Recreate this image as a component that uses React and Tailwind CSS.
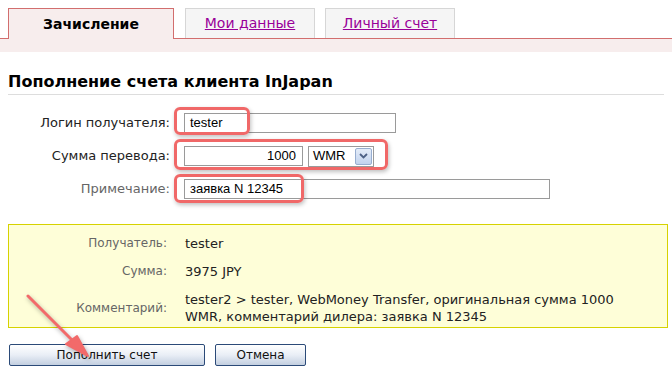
import React from 'react';

const Highlight = ({ className }) => (
    <div className={`absolute border-[3px] border-[#f06868] rounded-[6px] shadow-[1px_2px_4px_rgba(0,0,0,0.25)] pointer-events-none ${className}`} />
);

const App = () => {
    return (
        <div className="relative w-[672px] h-[369px] overflow-hidden bg-white text-[#222] font-['DejaVu_Sans',sans-serif]">
            {/* Tabs */}
            <div className="flex items-end pt-[8px] pl-[8px] border-b border-[#d26e6e]">
                <div className="w-[166px] h-[31px] -mb-px bg-[#f7eded] border border-b-0 border-[#d26e6e] flex items-center justify-center font-bold text-[14px] text-black">
                    Зачисление
                </div>
                <div className="ml-[11px] w-[130px] h-[30px] bg-[#f5f5f5] border border-b-0 border-[#d6d6d6] flex items-center justify-center text-[14px] text-[#990099] underline">
                    Мои данные
                </div>
                <div className="ml-[10px] w-[130px] h-[30px] bg-[#f5f5f5] border border-b-0 border-[#d6d6d6] flex items-center justify-center text-[14px] text-[#990099] underline">
                    Личный счет
                </div>
            </div>
            <div className="h-[13px] bg-[#f7eded]" />

            {/* Heading */}
            <div className="mx-[8px] mt-[20px] pb-[3px] border-b border-[#dddddd]">
                <h1 className="text-[16px] leading-[19px] font-bold text-black">Пополнение счета клиента InJapan</h1>
            </div>

            {/* Form */}
            <div className="mt-[18px] flex flex-col gap-[13px] text-[13px]">
                <div className="flex items-center h-[20px]">
                    <div className="w-[171px] text-right pr-[1px]">Логин получателя:</div>
                    <div className="relative ml-[13px]">
                        <div className="w-[212px] h-[20px] border border-[#9a9a9a] bg-white px-[5px] font-['Liberation_Sans',sans-serif] text-[13px] leading-[18px] text-black">tester</div>
                        <Highlight className="-left-[10px] -top-[6px] w-[76px] h-[28px]" />
                    </div>
                </div>
                <div className="flex items-center h-[20px]">
                    <div className="w-[171px] text-right pr-[1px]">Сумма перевода:</div>
                    <div className="relative ml-[13px] flex items-center">
                        <div className="w-[119px] h-[20px] border border-[#9a9a9a] bg-white px-[6px] text-right font-['Liberation_Sans',sans-serif] text-[13px] leading-[18px] text-black">1000</div>
                        <div className="ml-[5px] w-[66px] h-[21px] border border-[#9a9a9a] bg-white flex items-center pl-[4px] pr-[1px] font-['Liberation_Sans',sans-serif] text-[13px] text-black">
                            <span className="flex-1">WMR</span>
                            <div className="w-[17px] h-[17px] border border-[#98aed0] rounded-[2px] bg-gradient-to-b from-[#e4ecf8] to-[#c2d3ee] flex items-center justify-center">
                                <svg width="9" height="6" viewBox="0 0 9 6"><path d="M1 1 L4.5 4.5 L8 1" fill="none" stroke="#4d6185" strokeWidth="1.8" /></svg>
                            </div>
                        </div>
                        <Highlight className="-left-[10px] -top-[7px] w-[214px] h-[31px]" />
                    </div>
                </div>
                <div className="flex items-center h-[20px]">
                    <div className="w-[171px] text-right pr-[1px] text-[#666]">Примечание:</div>
                    <div className="relative ml-[13px]">
                        <div className="w-[366px] h-[20px] border border-[#9a9a9a] bg-white px-[5px] font-['Liberation_Sans',sans-serif] text-[13px] leading-[18px] text-black">заявка N 12345</div>
                        <Highlight className="-left-[10px] -top-[5px] w-[130px] h-[29px]" />
                    </div>
                </div>
            </div>

            {/* Summary box */}
            <div className="mt-[25px] mx-[8px] w-[660px] h-[104px] border border-[#d6d200] bg-[#fefed8] pt-[10px] leading-[17px]">
                <div className="grid grid-cols-[158px_1fr] gap-x-[18px] gap-y-[11px] items-center">
                    <div className="text-right text-[12px] text-[#666]">Получатель:</div>
                    <div className="text-[13px]">tester</div>
                    <div className="text-right text-[12px] text-[#666]">Сумма:</div>
                    <div className="text-[13px]">3975 JPY</div>
                    <div className="text-right text-[12px] text-[#666]">Комментарий:</div>
                    <div className="text-[13px]">
                        tester2 &gt; tester, WebMoney Transfer, оригинальная сумма 1000
                        <br />
                        WMR, комментарий дилера: заявка N 12345
                    </div>
                </div>
            </div>

            {/* Buttons */}
            <div className="mt-[16px] ml-[9px] flex gap-[10px] text-[12px]">
                <button className="w-[196px] h-[22px] border border-[#2b4a78] rounded-[2px] bg-gradient-to-b from-[#ffffff] via-[#e9eef6] to-[#c3cfe0] text-[#111]">
                    Пополнить счет
                </button>
                <button className="w-[91px] h-[22px] border border-[#2b4a78] rounded-[2px] bg-gradient-to-b from-[#ffffff] via-[#e9eef6] to-[#c3cfe0] text-[#111]">
                    Отмена
                </button>
            </div>

            {/* Annotation arrow */}
            <svg className="absolute left-0 top-0 pointer-events-none" width="672" height="369">
                <g style={{ filter: 'drop-shadow(1px 2px 2px rgba(0,0,0,0.3))' }}>
                    <line x1="28" y1="296" x2="80" y2="348" stroke="#f26a6a" strokeWidth="3" strokeLinecap="round" />
                    <path d="M88 356 L66 344 L77 336 Z" fill="#f26a6a" stroke="#f26a6a" strokeWidth="2" strokeLinejoin="round" />
                </g>
            </svg>
        </div>
    );
};

export default App;
